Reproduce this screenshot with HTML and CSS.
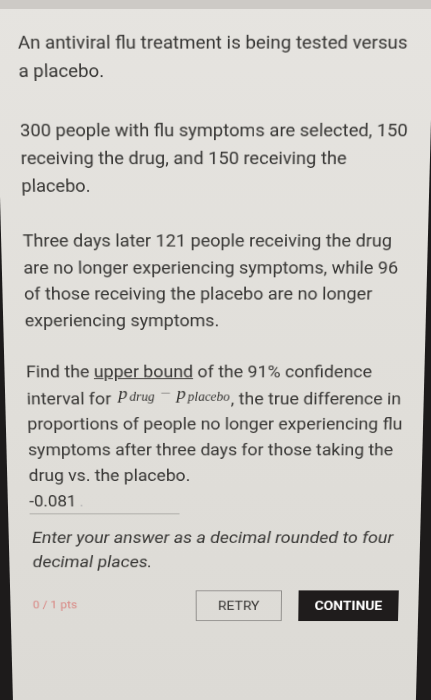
FILE: index.html
```html
<!DOCTYPE html>
<html lang="en">

<head>
    <meta charset="UTF-8">
    <meta name="viewport" content="width=device-width, initial-scale=1.0">
    <title>Question</title>
    <link rel="stylesheet" href="styles.css">
</head>

<body>
    <div id="screen">
        <div class="topbar"></div>
        <div class="question">
            <p class="intro">An antiviral flu treatment is being tested versus a placebo.</p>

            <p class="setup">300 people with flu symptoms are selected, 150 receiving the drug, and 150 receiving the placebo.</p>

            <p class="result">Three days later 121 people receiving the drug are no longer experiencing symptoms, while 96 of those receiving the placebo are no longer experiencing symptoms.</p>

            <p class="ask">Find the <u>upper bound</u> of the 91% confidence interval for
                <span class="math"><i>p</i><sub>drug</sub><span class="minus">&minus;</span><i>p</i><sub>placebo</sub></span>, the true difference in proportions of people no longer experiencing flu symptoms after three days for those taking the drug vs. the placebo.</p>

            <div class="answer">-0.081<span class="dot">.</span></div>

            <p class="hint">Enter your answer as a decimal rounded to four decimal places.</p>

            <div class="footer">
                <span class="pts">0 / 1 pts</span>
                <div class="buttons">
                    <button class="retry">RETRY</button>
                    <button class="continue">CONTINUE</button>
                </div>
            </div>
        </div>
    </div>
</body>

</html>
```

FILE: styles.css
```css
body,
html {
    margin: 0;
    height: 100%;
    background: #1d1b1b;
    font-family: Roboto, "Liberation Sans", sans-serif;
    overflow: hidden;
}

#screen {
    height: 700px;
    background: linear-gradient(to bottom, #e6e4e0, #e0ded9 60%, #dcdad5);
    clip-path: polygon(0 0, 100% 0, 100% 17%, 96.5% 100%, 3% 100%, 0 28%);
}

.topbar {
    height: 9px;
    background: #cdcac6;
}

/* photo of a phone: top of the screen is closer to the camera */
.question {
    padding: 20px 10px 0 17px;
    color: #383735;
    font-size: 18.6px;
    line-height: 28.8px;
    transform: perspective(800px) rotateX(-5.7deg);
    transform-origin: 217px 0;
}

.question p {
    margin: 0;
}

.intro {
    font-size: 18.8px;
}

.question p.intro {
    margin-bottom: 32.6px;
}

.question p.setup {
    margin-bottom: 29.2px;
}

.question p.result {
    margin-bottom: 26.8px;
}

.math {
    display: inline-block;
    font-family: "Liberation Serif", serif;
    font-style: italic;
    font-size: 19.5px;
    line-height: 18px;
    vertical-align: 6px;
    margin: 0 1px 0 3px;
}

.math sub {
    font-size: 14px;
    line-height: 0;
    padding-left: 2px;
    vertical-align: -2px;
}

.minus {
    font-style: normal;
    color: #8a8886;
    margin: 0 6px;
}

.answer {
    width: 160px;
    margin-top: 2px;
    padding-bottom: 2px;
    border-bottom: 1px solid #a9a7a3;
    font-size: 18px;
    line-height: 24px;
}

.dot {
    color: #bbb;
    margin-left: 3px;
}

.question p.hint {
    margin: 13.5px 0 0 2px;
    font-style: italic;
    font-size: 19px;
    line-height: 27.7px;
}

.footer {
    display: flex;
    align-items: center;
    justify-content: space-between;
    margin: 19px 8px 0 1px;
}

.pts {
    color: #d98a86;
    font-size: 13px;
}

.buttons {
    display: flex;
    gap: 18px;
}

button {
    font-family: Roboto, "Liberation Sans", sans-serif;
    font-size: 15px;
    height: 36.5px;
    padding: 0;
    border-radius: 0;
    cursor: pointer;
}

.retry {
    width: 93px;
    background: transparent;
    border: 1px solid #8c8a87;
    color: #3b3a38;
}

.continue {
    width: 108px;
    background: #1f1c1c;
    border: none;
    color: #fff;
    font-weight: bold;
}
```
